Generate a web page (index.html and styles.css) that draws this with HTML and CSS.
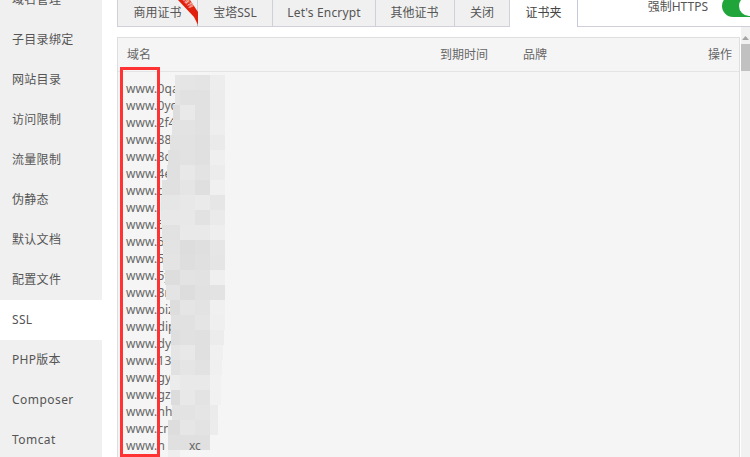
FILE: index.html
```html
<!DOCTYPE html>
<html lang="zh">
<head>
<meta charset="utf-8">
<title>SSL</title>
<link rel="stylesheet" href="styles.css">
</head>
<body>
<div class="app">
  <nav class="sidebar">
    <a class="nav-item">域名管理</a>
    <a class="nav-item">子目录绑定</a>
    <a class="nav-item">网站目录</a>
    <a class="nav-item">访问限制</a>
    <a class="nav-item">流量限制</a>
    <a class="nav-item">伪静态</a>
    <a class="nav-item">默认文档</a>
    <a class="nav-item">配置文件</a>
    <a class="nav-item active">SSL</a>
    <a class="nav-item">PHP版本</a>
    <a class="nav-item latin">Composer</a>
    <a class="nav-item latin">Tomcat</a>
  </nav>
  <main class="main">
    <div class="tabbar">
      <div class="tab tab-first">商用证书
        <svg class="ribbon" width="22" height="26" viewBox="0 0 22 26">
          <polygon points="0,0 12,0 20,12 20,25 16,17" fill="#e0200c"/>
          <polygon points="19,24 20,24 20,26 19,26" fill="#b9a9a9"/>
          <text class="ribbon-text" x="0" y="0" transform="translate(5,0) rotate(50)">推荐</text>
        </svg>
      </div>
      <div class="tab tab-ssl">宝塔SSL</div>
      <div class="tab tab-le">Let's Encrypt</div>
      <div class="tab tab-other">其他证书</div>
      <div class="tab tab-close">关闭</div>
      <div class="tab tab-active">证书夹</div>
      <div class="tab-rest">
        <span class="https-label">强制HTTPS</span>
        <span class="toggle"><span class="knob"></span></span>
      </div>
    </div>
    <div class="content">
      <section class="panel">
        <div class="thead">
          <span class="col-name">域名</span>
          <span class="col-date">到期时间</span>
          <span class="col-brand">品牌</span>
          <span class="col-op">操作</span>
        </div>
        <ul class="rows">
          <li>www.0qa</li><li>www.0yc</li><li>www.2f4</li><li>www.88</li><li>www.8d</li>
          <li>www.4e</li><li>www.d1</li><li>www.l</li><li>www.5</li><li>www.5</li>
          <li>www.5</li><li>www.5y</li><li>www.8r</li><li>www.biz</li><li>www.dip</li>
          <li>www.dy</li><li>www.130</li><li>www.gy</li><li>www.gz</li><li>www.nh9</li>
          <li>www.cn</li><li>www.n</li>
        </ul>
      </section>
      <div class="scrollbar">
        <svg class="arrow" width="9" height="6" viewBox="0 0 9 6"><polygon points="4.5,1 8,5 1,5" fill="#a3a3a3"/></svg>
        <div class="thumb"></div>
      </div>
    </div>
  </main>
</div>

<svg class="mosaic" width="750" height="457" viewBox="0 0 750 457" shape-rendering="crispEdges">
  <g fill="#e6e6e6"><rect x="175" y="75" width="5" height="15"/><rect x="180" y="75" width="15" height="15" fill="#e5e5e5"/><rect x="195" y="75" width="15" height="15" fill="#e4e4e4"/><rect x="210" y="75" width="15" height="15" fill="#ededed"/></g>
  <g><rect x="175" y="90" width="5" height="15" fill="#e4e4e4"/><rect x="180" y="90" width="15" height="15" fill="#e1e1e1"/><rect x="195" y="90" width="15" height="15" fill="#e1e1e1"/><rect x="210" y="90" width="15" height="15" fill="#ececec"/></g>
  <g><rect x="173" y="105" width="7" height="15" fill="#dddddd"/><rect x="180" y="105" width="15" height="15" fill="#e9e9e9"/><rect x="195" y="105" width="15" height="15" fill="#e1e1e1"/><rect x="210" y="105" width="15" height="15" fill="#ececec"/></g>
  <g><rect x="172" y="120" width="8" height="15" fill="#e3e3e3"/><rect x="180" y="120" width="15" height="15" fill="#e3e3e3"/><rect x="195" y="120" width="15" height="15" fill="#e1e1e1"/><rect x="210" y="120" width="15" height="15" fill="#eeeeee"/></g>
  <g><rect x="170" y="135" width="10" height="15" fill="#e2e2e2"/><rect x="180" y="135" width="15" height="15" fill="#e2e2e2"/><rect x="195" y="135" width="15" height="15" fill="#e0e0e0"/><rect x="210" y="135" width="15" height="15" fill="#eaeaea"/></g>
  <g><rect x="168" y="150" width="12" height="15" fill="#e0e0e0"/><rect x="180" y="150" width="15" height="15" fill="#e2e2e2"/><rect x="195" y="150" width="15" height="15" fill="#e0e0e0"/><rect x="210" y="150" width="15" height="15" fill="#efefef"/></g>
  <g><rect x="167" y="165" width="13" height="15" fill="#e0e0e0"/><rect x="180" y="165" width="15" height="15" fill="#e8e8e8"/><rect x="195" y="165" width="15" height="15" fill="#e3e3e3"/><rect x="210" y="165" width="15" height="15" fill="#ececec"/></g>
  <g><rect x="162" y="180" width="18" height="15" fill="#e0e0e0"/><rect x="180" y="180" width="15" height="15" fill="#e5e5e5"/><rect x="195" y="180" width="15" height="15" fill="#dfdfdf"/><rect x="210" y="180" width="15" height="15" fill="#f0f0f0"/></g>
  <g><rect x="161" y="195" width="19" height="15" fill="#e6e6e6"/><rect x="180" y="195" width="15" height="15" fill="#e8e8e8"/><rect x="195" y="195" width="15" height="15" fill="#eaeaea"/><rect x="210" y="195" width="15" height="15" fill="#e6e6e6"/></g>
  <g><rect x="161" y="210" width="19" height="15" fill="#e8e8e8"/><rect x="180" y="210" width="15" height="15" fill="#e8e8e8"/><rect x="195" y="210" width="15" height="15" fill="#e2e2e2"/><rect x="210" y="210" width="15" height="15" fill="#eaeaea"/></g>
  <g><rect x="162" y="225" width="18" height="15" fill="#e2e2e2"/><rect x="180" y="225" width="15" height="15" fill="#e9e9e9"/><rect x="195" y="225" width="15" height="15" fill="#e9e9e9"/><rect x="210" y="225" width="15" height="15" fill="#eeeeee"/></g>
  <g><rect x="163" y="240" width="17" height="15" fill="#e3e3e3"/><rect x="180" y="240" width="15" height="15" fill="#dddddd"/><rect x="195" y="240" width="15" height="15" fill="#dfdfdf"/><rect x="210" y="240" width="15" height="15" fill="#e6e6e6"/></g>
  <g><rect x="163" y="255" width="17" height="15" fill="#e4e4e4"/><rect x="180" y="255" width="15" height="15" fill="#dedede"/><rect x="195" y="255" width="15" height="15" fill="#e0e0e0"/><rect x="210" y="255" width="15" height="15" fill="#e5e5e5"/></g>
  <g><rect x="165" y="270" width="15" height="15" fill="#dddddd"/><rect x="180" y="270" width="15" height="15" fill="#e3e3e3"/><rect x="195" y="270" width="15" height="15" fill="#e2e2e2"/><rect x="210" y="270" width="15" height="15" fill="#efefef"/></g>
  <g><rect x="166" y="285" width="14" height="15" fill="#e4e4e4"/><rect x="180" y="285" width="15" height="15" fill="#dddddd"/><rect x="195" y="285" width="15" height="15" fill="#e1e1e1"/><rect x="210" y="285" width="15" height="15" fill="#e3e3e3"/></g>
  <g><rect x="170" y="300" width="10" height="15" fill="#dddddd"/><rect x="180" y="300" width="15" height="15" fill="#e5e5e5"/><rect x="195" y="300" width="15" height="15" fill="#e3e3e3"/><rect x="210" y="300" width="15" height="15" fill="#f0f0f0"/></g>
  <g><rect x="171" y="315" width="9" height="15" fill="#e1e1e1"/><rect x="180" y="315" width="15" height="15" fill="#e1e1e1"/><rect x="195" y="315" width="15" height="15" fill="#e5e5e5"/><rect x="210" y="315" width="15" height="15" fill="#efefef"/></g>
  <g><rect x="171" y="330" width="9" height="15" fill="#dedede"/><rect x="180" y="330" width="15" height="15" fill="#e1e1e1"/><rect x="195" y="330" width="15" height="15" fill="#e0e0e0"/><rect x="210" y="330" width="14" height="15" fill="#ececec"/></g>
  <g><rect x="171" y="345" width="9" height="15" fill="#e5e5e5"/><rect x="180" y="345" width="15" height="15" fill="#e8e8e8"/><rect x="195" y="345" width="15" height="15" fill="#e0e0e0"/><rect x="210" y="345" width="13" height="15" fill="#f0f0f0"/></g>
  <g><rect x="171" y="360" width="9" height="15" fill="#e1e1e1"/><rect x="180" y="360" width="15" height="15" fill="#e5e5e5"/><rect x="195" y="360" width="15" height="15" fill="#e2e2e2"/><rect x="210" y="360" width="12" height="15" fill="#f0f0f0"/></g>
  <g><rect x="170" y="375" width="10" height="15" fill="#ececec"/><rect x="180" y="375" width="15" height="15" fill="#e9e9e9"/><rect x="195" y="375" width="15" height="15" fill="#e9e9e9"/><rect x="210" y="375" width="11" height="15" fill="#f1f1f1"/></g>
  <g><rect x="171" y="390" width="9" height="15" fill="#dcdcdc"/><rect x="180" y="390" width="15" height="15" fill="#e8e8e8"/><rect x="195" y="390" width="15" height="15" fill="#e3e3e3"/><rect x="210" y="390" width="11" height="15" fill="#f1f1f1"/></g>
  <g><rect x="172" y="405" width="8" height="15" fill="#e3e3e3"/><rect x="180" y="405" width="15" height="15" fill="#e3e3e3"/><rect x="195" y="405" width="15" height="15" fill="#e5e5e5"/><rect x="210" y="405" width="8" height="15" fill="#ebebeb"/></g>
  <g><rect x="168" y="420" width="12" height="15" fill="#dddddd"/><rect x="180" y="420" width="15" height="15" fill="#e6e6e6"/><rect x="195" y="420" width="15" height="15" fill="#e3e3e3"/><rect x="210" y="420" width="8" height="15" fill="#ececec"/></g>
  <g><rect x="168" y="435" width="12" height="15" fill="#e0e0e0"/><rect x="180" y="435" width="15" height="15" fill="#e0e0e0"/><rect x="195" y="435" width="15" height="15" fill="#e0e0e0"/></g>
  <rect x="168" y="450" width="12" height="7" fill="#eeeeee"/>
  <text class="mosaic-text" x="189" y="450">xc</text>
</svg>

<div class="highlight"></div>
</body>
</html>
```

FILE: styles.css
```css
* { box-sizing: border-box; }

html, body {
  margin: 0;
  height: 457px;
  overflow: hidden;
  background: #fff;
}

body {
  font-family: "Noto Sans", "Noto Sans CJK SC", sans-serif;
  font-size: 12px;
  color: #555;
  position: relative;
}

.app {
  display: flex;
  height: 457px;
}

.sidebar {
  width: 102px;
  flex: none;
  margin-top: -20px;
  background: #f0f0f0;
  height: 477px;
}

.nav-item {
  display: block;
  height: 40px;
  line-height: 40px;
  padding-left: 12px;
  color: #555;
  letter-spacing: 0.3px;
}

.nav-item.latin {
  letter-spacing: 0.45px;
}

.nav-item.active {
  background: #fff;
  color: #555;
}

.main {
  flex: 1;
  min-width: 0;
  padding-left: 15px;
}

.tabbar {
  display: flex;
  height: 27px;
}

.tab {
  position: relative;
  height: 27px;
  line-height: 25px;
  text-align: center;
  background: #f0f0f0;
  color: #555;
  border-right: 1px solid #d0d0da;
  border-bottom: 1px solid #d0d0da;
  flex: none;
}

.tab-first { width: 81px; border-left: 1px solid #d0d0da; }
.tab-ssl { width: 75px; }
.tab-le { width: 103px; letter-spacing: 0.15px; }
.tab-other { width: 79px; padding-right: 1px; }
.tab-close { width: 55px; }

.tab-active {
  width: 68px;
  background: #fff;
  border-bottom: 0;
  border-right: 1px solid #c8c8d8;
  color: #444;
}

.ribbon {
  position: absolute;
  right: -3px;
  top: 0;
}

.ribbon-text {
  font-size: 6px;
  fill: #fbdcd6;
}

.tab-rest {
  flex: 1;
  min-width: 0;
  display: flex;
  align-items: flex-start;
  justify-content: flex-end;
  border-bottom: 1px solid #d0d0da;
  overflow: hidden;
}

.https-label {
  line-height: 13px;
  margin-top: 0;
  margin-right: 14px;
}

.toggle {
  position: relative;
  flex: none;
  width: 28px;
  height: 22px;
  margin-top: -5px;
  background: #20a53a;
  border-radius: 11px 0 0 11px;
}

.knob {
  position: absolute;
  left: 17px;
  top: 1px;
  width: 20px;
  height: 20px;
  border-radius: 50%;
  background: #fff;
}

.content {
  display: flex;
  padding-top: 10px;
  height: 430px;
}

.panel {
  width: 623px;
  flex: none;
  background: #f5f5f5;
  border: 1px solid #dedede;
  border-bottom: 0;
  overflow: hidden;
}

.thead {
  display: flex;
  height: 34px;
  line-height: 34px;
  padding-left: 9px;
  border-bottom: 1px solid #e4e4e4;
  color: #666;
}

.col-name { width: 313px; }
.col-date { width: 83px; }
.col-brand { width: 185px; }
.col-op { width: 26px; }

.rows {
  list-style: none;
  margin: 0;
  padding: 8px 0 0 8px;
}

.rows li {
  height: 17px;
  line-height: 17px;
  color: #666;
  letter-spacing: 0.1px;
}

.scrollbar {
  margin-left: 1px;
  width: 9px;
  background: #f1f1f1;
  margin-top: -10px;
  padding-top: 8px;
}

.arrow {
  display: block;
}

.thumb {
  width: 9px;
  height: 27px;
  margin-top: 3px;
  background: #c1c1c1;
}

.mosaic {
  position: absolute;
  left: 0;
  top: 0;
  pointer-events: none;
}

.mosaic-text {
  font-size: 12px;
  fill: #666;
  font-family: "Noto Sans", sans-serif;
}

.highlight {
  position: absolute;
  left: 120px;
  top: 67px;
  width: 40px;
  height: 390px;
  border: 3px solid #f33;
}
```
